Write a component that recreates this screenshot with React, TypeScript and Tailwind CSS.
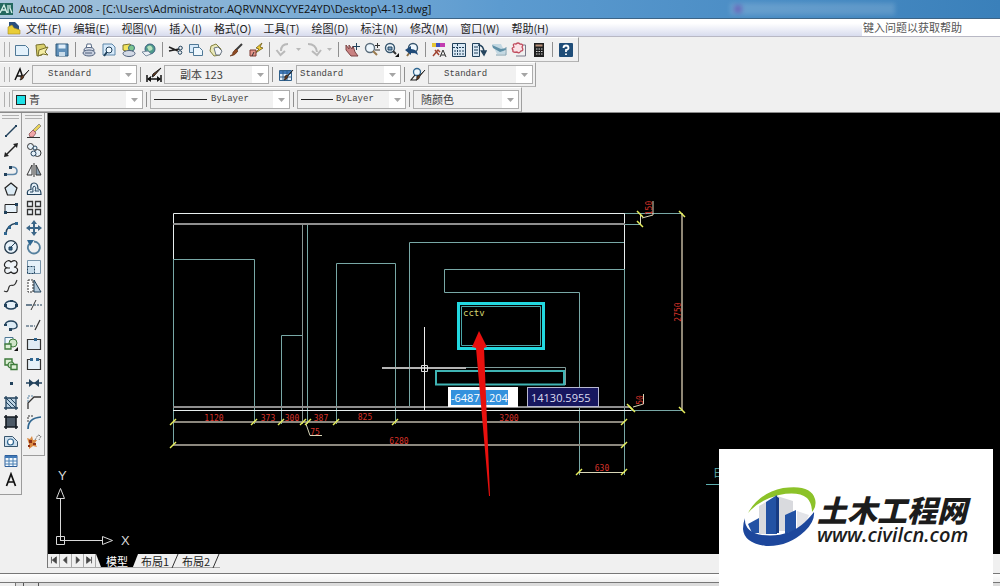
import type { ReactNode } from 'react'

type Tool = { name: string; art: ReactNode }

const INK = '#22425c'

const standardGroups: Tool[][] = [
  [
    {
      name: '新建',
      art: <path d="M1.500 3.500h10l3 3v7h-13z" fill="#e3f1fb" stroke="#4f7896" />,
    },
    {
      name: '打开',
      art: (
        <>
          <path d="M2 3l8-1 2 3-4 8-5 1z" fill="#d9cf6a" stroke="#77702e" />
          <path d="M5 8l9-3-3 5 3 3-5-1-5 2z" fill="#f4eda4" stroke="#77702e" />
        </>
      ),
    },
    {
      name: '保存',
      art: (
        <>
          <path d="M2 2h12v12H2z" fill="#5f8fb8" stroke="#2e5878" />
          <path d="M4.500 2.500h7v4h-7z" fill="#dfeefa" />
          <path d="M5 10h6v4H5z" fill="#c9dcea" />
        </>
      ),
    },
  ],
  [
    {
      name: '打印',
      art: (
        <>
          <path d="M5 7l1-5h4l1 5" fill="#fff" stroke="#5a6c86" />
          <ellipse cx="8" cy="8" rx="5" ry="2.500" fill="#dfe4ee" stroke="#50617c" />
          <ellipse cx="8" cy="11" rx="6" ry="3" fill="#c7cfde" stroke="#50617c" />
          <path d="M4 11h7" stroke="#50617c" />
        </>
      ),
    },
    {
      name: '打印预览',
      art: (
        <>
          <path d="M2 2h9l3 3v8H2z" fill="#d7eafa" stroke="#5d86a8" />
          <circle cx="8" cy="8" r="3" fill="#f4fbff" stroke={INK} />
          <path d="M6 10l-3 4" stroke={INK} strokeWidth="2" />
        </>
      ),
    },
    {
      name: '发布',
      art: (
        <>
          <path d="M2 3l7-1 3 4-5 4-5-2z" fill="#f1e35c" stroke="#7b742e" />
          <circle cx="10.500" cy="6" r="3" fill="#7cc68f" stroke="#3c6a7c" />
          <ellipse cx="8" cy="11.500" rx="6" ry="3" fill="#d3dae6" stroke="#50617c" />
        </>
      ),
    },
    {
      name: '三维 DWF',
      art: (
        <>
          <circle cx="9" cy="7" r="5" fill="#4f9a8c" stroke="#3c6180" />
          <path d="M6 5q3-3 5 0t-3 4z" fill="#b9e2bd" />
          <path d="M1 10l6-1 3 3-5 2z" fill="#e9eef4" stroke="#7c8ea0" />
        </>
      ),
    },
  ],
  [
    {
      name: '剪切',
      art: (
        <>
          <path d="M1 5l9 4M1 9l10-2" stroke="#222" strokeWidth="1.500" />
          <circle cx="12.500" cy="6" r="1.800" fill="none" stroke={INK} />
          <circle cx="12" cy="10.500" r="1.800" fill="none" stroke={INK} />
        </>
      ),
    },
    {
      name: '复制',
      art: (
        <>
          <path d="M1.500 2.500h9v8h-9z" fill="#d7eafa" stroke="#4f7896" />
          <path d="M5.500 5.500h6l3 3v5h-9z" fill="#eef7fd" stroke="#4f7896" />
        </>
      ),
    },
    {
      name: '粘贴',
      art: (
        <>
          <path d="M3 4l5-2 5 5-1 6-6 1-4-5z" fill="#e9e8b8" stroke="#85823f" />
          <path d="M6 6l4-1 4 4-2 4H8z" fill="#f3f6fa" stroke="#6b7684" />
        </>
      ),
    },
    {
      name: '特性匹配',
      art: (
        <>
          <path d="M14 2L7 9" stroke="#3c3c3c" strokeWidth="2" />
          <path d="M8 7l2 2q-3 5-8 5 3-1 3-4z" fill="#8e4b23" stroke="#5c2c10" strokeWidth=".6" />
        </>
      ),
    },
    {
      name: '块编辑器',
      art: (
        <>
          <path d="M14 1L8 6l3 1-5 5 9-6-3-1z" fill="#f2cd36" stroke="#6d5a17" strokeWidth=".8" />
          <path d="M2 8h6v6H2z" fill="#e4968a" stroke="#7a3930" />
          <path d="M4 14l2-4" stroke="#333" />
        </>
      ),
    },
  ],
]

const undoTools: Tool[] = [
  {
    name: '放弃',
    art: <path d="M13 2Q6 2 6 9M1.500 8l4 5 4.500-4" fill="none" stroke="#b9b9b9" strokeWidth="2" />,
  },
  {
    name: '重做',
    art: <path d="M2 2q8 0 9 8M6 9l5 4 4-5" fill="none" stroke="#b9b9b9" strokeWidth="2" />,
  },
]

const viewGroups: Tool[][] = [
  [
    {
      name: '实时平移',
      art: (
        <>
          <path d="M2 3l3 4 0-4 3 4 1-3 2 6 3 4H7L2 8z" fill="#c98282" stroke="#7d4545" />
          <path d="M12.500 1v7M9 4.500h7" stroke={INK} />
        </>
      ),
    },
    {
      name: '实时缩放',
      art: (
        <>
          <circle cx="6" cy="6" r="4.500" fill="#eef7fd" stroke="#5b6d7c" strokeWidth="1.400" />
          <path d="M9 9l4 4" stroke="#9a7a4c" strokeWidth="2" />
          <path d="M13.500 1v5M11 3.500h5M11 8h5" stroke="#333" />
        </>
      ),
    },
    {
      name: '窗口缩放',
      art: (
        <>
          <circle cx="6" cy="6" r="4.500" fill="#eef7fd" stroke="#37556d" strokeWidth="1.400" />
          <path d="M4 5h4v3H4z" fill="#7fa4c4" stroke={INK} />
          <path d="M9 9l3 3" stroke="#333" strokeWidth="2" />
          <path d="M15 11v4h-4z" fill="#111" />
        </>
      ),
    },
    {
      name: '缩放上一个',
      art: (
        <>
          <circle cx="9" cy="6" r="4.500" fill="#eef7fd" stroke="#37556d" strokeWidth="1.400" />
          <path d="M6 10l-3 4" stroke="#8a6f48" strokeWidth="2" />
          <path d="M1 8l6-4v3q6 0 7 6-4-3-7-2v2z" fill="#1f4a78" />
        </>
      ),
    },
  ],
  [
    {
      name: '特性',
      art: (
        <>
          <path d="M1 1h4v4H1z" fill="#e6c534" />
          <path d="M5 1h4v4H5z" fill="#3d4fbf" />
          <path d="M9 1h5v4H9z" fill="#c23cb0" />
          <path d="M2 14l5-6 2 2M4 8l4 5" stroke="#a04230" strokeWidth="1.500" fill="none" />
          <path d="M9 15l3-7 3 7M10 13h4" stroke="#333" fill="none" />
        </>
      ),
    },
    {
      name: '设计中心',
      art: (
        <>
          <path d="M1.500 1.500h13v13h-13z" fill="#d9e8f4" stroke={INK} />
          <path d="M6.500 2v12M2 5.500h12M8 9h5M8 12h5M3 9h2M3 12h2" stroke={INK} strokeDasharray="2 1" />
        </>
      ),
    },
    {
      name: '工具选项板',
      art: (
        <>
          <path d="M1.500 1.500h7v13h-7z" fill="#d9e8f4" stroke={INK} />
          <path d="M3 5h4M3 8h4M3 11h4" stroke={INK} />
          <path d="M7 3q6 0 6 8M10.500 9l2.500 4 2-4z" fill="none" stroke={INK} strokeWidth="1.500" />
        </>
      ),
    },
    {
      name: '图纸集',
      art: (
        <>
          <path d="M1 2h9l5 10H6z" fill="#c3d8e2" />
          <path d="M1 3l9 4 5-1v2L9 10 2 6z" fill="#5f8fa6" />
          <path d="M5 13h10V5" stroke="#7f9fae" fill="none" />
        </>
      ),
    },
    {
      name: '标记集',
      art: (
        <>
          <path d="M12 3h2.500v11H5" fill="none" stroke="#7a7a8a" />
          <path
            d="M3 5q-2-4 2-3 2-2 4 0 4 0 2 3 2 4-1 4-2 3-4 1-5 1-4-2-2-2 1-3z"
            fill="#fae2e6"
            stroke="#c04c5e"
            strokeWidth="1.300"
          />
        </>
      ),
    },
    {
      name: '快速计算器',
      art: (
        <>
          <path d="M3 1h10v14H3z" fill="#1f1f1f" />
          <path d="M4.500 2.500h7v2h-7z" fill="#b89078" />
          <path d="M5 7h7M5 9.500h7M5 12h7" stroke="#d2d2d2" strokeDasharray="1.500 1" />
        </>
      ),
    },
  ],
  [
    {
      name: '帮助',
      art: (
        <>
          <rect x="1" y="1" width="14" height="14" rx="1" fill="#1f4d78" />
          <path d="M5.500 6q0-2.500 2.500-2.500T10.500 6Q10.500 7.500 8 8v2M8 11.500v1.500" fill="none" stroke="#fff" strokeWidth="1.800" />
        </>
      ),
    },
  ],
]

const drawTools: Tool[] = [
  {
    name: '直线',
    art: (
      <>
        <path d="M3 13L13 3" stroke={INK} strokeWidth="1.500" />
        <path d="M2 12h2v2H2zM12 2h2v2h-2z" fill={INK} />
      </>
    ),
  },
  {
    name: '构造线',
    art: (
      <>
        <path d="M3 13L13 3" stroke="#222" strokeWidth="1.500" />
        <path d="M1 15l1-5 4 4zM15 1l-1 5-4-4z" fill="#222" />
      </>
    ),
  },
  {
    name: '多段线',
    art: (
      <>
        <path d="M2 12.500h8q4 0 4-3.500T10 5H8" fill="none" stroke="#5d86a8" strokeWidth="1.500" />
        <path d="M1 11h3v3H1zM6 4h3v3H6z" fill={INK} />
      </>
    ),
  },
  {
    name: '正多边形',
    art: <path d="M8 2l6 5-2.500 7h-7L2 7z" fill="#dcebf5" stroke="#222" strokeWidth="1.200" />,
  },
  {
    name: '矩形',
    art: (
      <>
        <path d="M2 4.500h12v8H2z" fill="#e6f1f9" stroke="#222" />
        <path d="M1 11h3v3H1zM12 3h3v3h-3z" fill={INK} />
      </>
    ),
  },
  {
    name: '圆弧',
    art: (
      <>
        <path d="M3 14q0-9 11-11" fill="none" stroke={INK} strokeWidth="1.300" />
        <path d="M1 12h3v3H1zM5 6h3v3H5zM12 2h3v3h-3z" fill="#2f6690" />
      </>
    ),
  },
  {
    name: '圆',
    art: (
      <>
        <circle cx="8" cy="8" r="6.300" fill="#e6f1f9" stroke="#23384a" strokeWidth="1.300" />
        <path d="M7 9l5-5M6 8h3v3H6z" fill="#2f6690" stroke={INK} />
      </>
    ),
  },
  {
    name: '修订云线',
    art: (
      <path
        d="M5 9Q0 8 2 4q3-4 6-1 5-3 6 1 0 4-3 4 5 1 3 5-3 3-6 0-4 3-6 0-1-4 2-4h3"
        fill="#eef3f7"
        stroke="#222"
        strokeWidth="1.200"
      />
    ),
  },
  {
    name: '样条曲线',
    art: <path d="M1 13c4 2 4-1 5-4s3-1 5-2 2-3 3-5" fill="none" stroke="#333" strokeWidth="1.200" />,
  },
  {
    name: '椭圆',
    art: (
      <>
        <ellipse cx="8" cy="8" rx="6" ry="4" fill="#e6f1f9" stroke={INK} strokeWidth="1.400" />
        <path d="M1 7h3v3H1zM12 7h3v3h-3zM7 3h3v2H7z" fill={INK} />
      </>
    ),
  },
  {
    name: '椭圆弧',
    art: (
      <>
        <path d="M2 8q1-4 6-4t6 4-6 4" fill="#dcebf5" stroke={INK} strokeWidth="1.400" />
        <path d="M6 11h3v3H6zM1 7h3v2H1z" fill={INK} />
      </>
    ),
  },
  {
    name: '插入块',
    art: (
      <>
        <path d="M2 1.500h8v8H2z" fill="#eef7fd" stroke="#4f7896" />
        <circle cx="10" cy="7" r="4" fill="#cfe6c8" stroke="#3d7a3a" />
        <path d="M2 8h6v5H2z" fill="#dff0d8" stroke="#3d7a3a" strokeWidth="1.300" />
        <path d="M15 11v4h-4z" fill="#111" />
      </>
    ),
  },
  {
    name: '创建块',
    art: (
      <>
        <path d="M2 3h7v6H2z" fill="#dff0d8" stroke="#3d7a3a" strokeWidth="1.400" />
        <circle cx="8" cy="9" r="3" fill="#cfe6c8" stroke="#3d7a3a" strokeWidth="1.200" />
        <path d="M8 8.500h6v5H8z" fill="#dff0d8" stroke="#3d7a3a" strokeWidth="1.400" />
      </>
    ),
  },
  {
    name: '点',
    art: <path d="M7 7h3v3H7z" fill={INK} />,
  },
  {
    name: '图案填充',
    art: (
      <>
        <path d="M3 3h10v10H3z" fill="#bcd2e2" />
        <path d="M3 7l6 6M3 3l10 10M7 3l6 6" stroke={INK} />
        <path d="M3 1v14M13 1v14M1 3h14M1 13h14" stroke={INK} strokeWidth="1.300" />
      </>
    ),
  },
  {
    name: '渐变色',
    art: (
      <>
        <path d="M3 3h10v10H3z" fill="#4c5966" />
        <path d="M3 1v14M13 1v14M1 3h14M1 13h14" stroke="#151b22" strokeWidth="1.600" />
      </>
    ),
  },
  {
    name: '面域',
    art: (
      <>
        <path d="M1.500 3.500h8l5 5v5h-13z" fill="#cfe0ee" stroke="#37556d" />
        <circle cx="7.500" cy="9" r="3" fill="#fff" stroke="#2f6690" strokeWidth="1.200" />
      </>
    ),
  },
  {
    name: '表格',
    art: (
      <>
        <path d="M2 2.500h12v11H2z" fill="#f4f9fd" stroke="#2f5f9a" />
        <path d="M2 3h12v2H2z" fill="#3f78b8" />
        <path d="M6 3v10M10 3v10M2 8h12M2 11h12" stroke="#4a80b4" />
      </>
    ),
  },
  {
    name: '多行文字',
    art: <path d="M3.500 14L8 2l4.500 12M5 10h6" fill="none" stroke="#111" strokeWidth="1.700" />,
  },
]

const modifyTools: Tool[] = [
  {
    name: '删除',
    art: (
      <>
        <path d="M7 7l6-6 2 2-6 6z" fill="#e8d25a" stroke="#777" strokeWidth=".7" />
        <path d="M3 11l4-4 3 3-3 4H4z" fill="#f0a6a8" stroke="#8d4f52" strokeWidth=".8" />
        <path d="M1 14.500h13" stroke="#333" />
      </>
    ),
  },
  {
    name: '复制对象',
    art: (
      <>
        <circle cx="4.500" cy="4.500" r="3" fill="#e6f1f9" stroke="#333" />
        <circle cx="9" cy="6" r="2" fill="#e6f1f9" stroke={INK} />
        <circle cx="11.500" cy="11" r="3.500" fill="#e6f1f9" stroke="#333" />
        <circle cx="7.500" cy="11.500" r="2.500" fill="#e6f1f9" stroke={INK} />
      </>
    ),
  },
  {
    name: '镜像',
    art: (
      <>
        <path d="M6 3v10H1z" fill="#f3f6f8" stroke="#333" />
        <path d="M10 3v10h5z" fill="#8aa0b2" stroke="#333" />
        <path d="M8 1v14" stroke="#333" />
      </>
    ),
  },
  {
    name: '偏移',
    art: (
      <>
        <path d="M1.500 13.500q-1-5 3.500-5Q4 2 8 2t4 6q3 0 3 5.500z" fill="#e6f1f9" stroke={INK} strokeWidth="1.200" />
        <path d="M4 11h3q-1-5 1-6 3 1 1 5h4" fill="none" stroke={INK} />
      </>
    ),
  },
  {
    name: '阵列',
    art: (
      <path
        d="M1.500 1.500h5v5h-5zM9.500 1.500h5v5h-5zM1.500 9.500h5v5h-5zM9.500 9.500h5v5h-5z"
        fill="#eef3f7"
        stroke="#333"
        strokeWidth="1.300"
      />
    ),
  },
  {
    name: '移动',
    art: (
      <>
        <path d="M8 2v12M2 8h12" stroke="#3b6688" strokeWidth="2" />
        <path d="M8 0l3 4H5zM8 16l3-4H5zM0 8l4-3v6zM16 8l-4-3v6z" fill="#3b6688" />
      </>
    ),
  },
  {
    name: '旋转',
    art: (
      <>
        <path d="M8 2.500A6 6 0 1 1 3 5" fill="none" stroke="#55809e" strokeWidth="1.800" />
        <path d="M1 1h7l-4 6z" fill="#2f6690" />
      </>
    ),
  },
  {
    name: '缩放',
    art: (
      <>
        <path d="M1.500 1.500h13v13h-13z" fill="#e6f1f9" stroke="#7794aa" />
        <path d="M1.500 7.500h7v7h-7z" fill="#c7dcea" stroke={INK} strokeDasharray="2 1" />
      </>
    ),
  },
  {
    name: '拉伸',
    art: (
      <>
        <path d="M8 2v12h7z" fill="#b4cadb" stroke={INK} />
        <path d="M2 2h5v12H2z" fill="#fff" stroke="#333" strokeDasharray="2 1" />
      </>
    ),
  },
  {
    name: '修剪',
    art: (
      <>
        <path d="M0 8h6" stroke={INK} strokeWidth="1.300" />
        <path d="M8 8h8" stroke={INK} strokeDasharray="2 1" />
        <path d="M5 13l5-10" stroke="#333" />
      </>
    ),
  },
  {
    name: '延伸',
    art: (
      <>
        <path d="M0 9h9" stroke={INK} strokeDasharray="3 1" />
        <path d="M9 13l5-10" stroke="#333" strokeWidth="1.300" />
      </>
    ),
  },
  {
    name: '打断于点',
    art: (
      <>
        <path d="M1.500 3.500h13v10h-13z" fill="#dfebf4" stroke="#333" strokeWidth="1.200" />
        <path d="M8 2h3v3H8z" fill="#2f6690" />
      </>
    ),
  },
  {
    name: '打断',
    art: (
      <>
        <path d="M1.500 3.500h13v10h-13z" fill="#e6f1f9" />
        <path d="M5 3.500H1.500v10h13v-10H11" stroke="#333" strokeWidth="1.200" />
        <path d="M4 2h3v3H4zM10 2h3v3h-3z" fill="#2f6690" />
      </>
    ),
  },
  {
    name: '合并',
    art: (
      <>
        <path d="M0 8h16" stroke={INK} strokeWidth="1.500" />
        <path d="M3 4l5 4-5 4zM13 4L8 8l5 4z" fill={INK} />
      </>
    ),
  },
  {
    name: '倒角',
    art: (
      <>
        <path d="M2 15V9l6-6h7" fill="none" stroke="#333" strokeWidth="1.300" />
        <path d="M2 8V2h6" fill="none" stroke="#5580a0" strokeDasharray="2 1" />
      </>
    ),
  },
  {
    name: '圆角',
    art: (
      <>
        <path d="M2 15Q2 4 15 3" fill="none" stroke="#2f6690" strokeWidth="1.700" />
        <path d="M2 8V2h6" fill="none" stroke="#333" strokeDasharray="2 1" />
      </>
    ),
  },
  {
    name: '分解',
    art: (
      <>
        <path d="M9 7l3-5 3 1-2 4" stroke="#777" fill="none" strokeDasharray="2 1" />
        <path d="M1 5l3 1 2-3 1 4 4 0-2 3 2 4-4-1-4 3 0-5z" fill="#d98a43" />
        <path d="M3 7h3v3H3zM7 10h3v2H7zM2 12h2v2H2z" fill="#8c2f16" />
      </>
    ),
  },
]

const brush = (
  <path d="M15 3l-5 6q-1 4-4 4 1-1 1-4l3-1z" fill="#6b3b1c" stroke="#222" strokeWidth=".8" />
)

const styles = [
  {
    name: '文字样式',
    value: 'Standard',
    pad: 'pl-[15px] font-[Liberation_Mono,monospace] text-[9px]',
    art: (
      <>
        <path d="M1 13L6 2l3 9M3 9h5" fill="none" stroke="#111" strokeWidth="1.500" />
        {brush}
      </>
    ),
  },
  {
    name: '标注样式',
    value: '副本 123',
    pad: 'pl-[15px] font-[Noto_Sans_CJK_SC,sans-serif] text-[11px]',
    art: (
      <>
        <path d="M1 8v7M15 8v7M2 12h12" stroke="#111" strokeWidth="1.500" />
        <path d="M1 12l4-3v6zM15 12l-4-3v6z" fill="#111" />
        <path d="M15 1l-7 8-2 1 1-3z" fill="#6b3b1c" stroke="#222" />
      </>
    ),
  },
  {
    name: '表格样式',
    value: 'Standard',
    pad: 'pl-[3px] font-[Liberation_Mono,monospace] text-[9px]',
    art: (
      <>
        <path d="M1.500 3.500h12v10h-12z" fill="#dfebf6" stroke="#2f5f8a" />
        <path d="M2 4h11v3H2z" fill="#3f78b8" />
        <path d="M5 4v9M9 4v9M2 10h11" stroke="#2f5f8a" />
        {brush}
      </>
    ),
  },
  {
    name: '多重引线样式',
    value: 'Standard',
    pad: 'pl-[15px] font-[Liberation_Mono,monospace] text-[9px]',
    art: (
      <>
        <circle cx="7" cy="5" r="3.500" fill="#eef7fd" stroke="#2f6690" strokeWidth="1.300" />
        <path d="M5 8l-4 5h6" fill="none" stroke="#222" strokeWidth="1.200" />
        {brush}
      </>
    ),
  },
]

const menus = [
  '文件(F)', '编辑(E)', '视图(V)', '插入(I)', '格式(O)', '工具(T)',
  '绘图(D)', '标注(N)', '修改(M)', '窗口(W)', '帮助(H)',
]

function Icon({ children }: { children: ReactNode }) {
  return (
    <svg viewBox="0 0 16 16" className="size-4 shrink-0" fill="none" aria-hidden="true">
      {children}
    </svg>
  )
}

function ToolButton({ tool }: { tool: Tool }) {
  return (
    <button
      type="button"
      aria-label={tool.name}
      className="flex w-5 items-center justify-center hover:bg-sky-100"
    >
      <Icon>{tool.art}</Icon>
    </button>
  )
}

function Divider() {
  return (
    <span className="flex w-[7px] shrink-0 justify-center py-1">
      <span className="w-px bg-[#8f8f8f]" />
    </span>
  )
}

function Grip() {
  return (
    <span className="flex w-3 shrink-0 gap-1 py-1 pl-1">
      <span className="w-px bg-[#b0b0b0]" />
      <span className="w-px bg-[#b0b0b0]" />
    </span>
  )
}

function Toolbar({ children }: { children: ReactNode }) {
  return (
    <div className="flex h-[25px] w-fit items-stretch border-t border-r border-b border-t-white border-r-[#a0a0a0] border-b-[#b4b4b4] pr-[2px]">
      {children}
    </div>
  )
}

function MoreButton({ name }: { name: string }) {
  return (
    <button type="button" aria-label={name} className="flex w-[11px] items-center justify-center">
      <svg viewBox="0 0 5 3" className="w-[5px]" aria-hidden="true">
        <path d="M0 0h5L2.500 3z" fill="#b9b9b9" />
      </svg>
    </button>
  )
}

function Combo({
  name,
  value,
  width,
  pad,
  children,
}: {
  name: string
  value: string
  width: string
  pad: string
  children?: ReactNode
}) {
  return (
    <div className={`relative h-[19px] self-center ${width}`}>
      <select
        aria-label={name}
        className={`block size-full appearance-none border border-[#adadad] bg-[#f1f1f1] text-[#444] outline-none ${pad}`}
      >
        <option>{value}</option>
      </select>
      <span className="pointer-events-none absolute inset-y-px right-px flex w-4 items-center justify-center bg-white">
        <svg viewBox="0 0 7 4" className="w-[7px]" aria-hidden="true">
          <path d="M0 0h7L3.500 4z" fill="#a5a5a5" />
        </svg>
      </span>
      {children}
    </div>
  )
}

function Palette({ tools, label, size }: { tools: Tool[]; label: string; size: string }) {
  return (
    <div
      role="toolbar"
      aria-label={label}
      className="w-[22px] border-r border-b border-[#9c9c9c] pb-1"
    >
      <div className="mx-[2px] mt-[2px] h-1 border-y border-[#b0b0b0]" />
      <div className={`grid auto-rows-fr justify-center pt-[2px] ${size}`}>
        {tools.map((tool) => (
          <ToolButton key={tool.name} tool={tool} />
        ))}
      </div>
    </div>
  )
}

// [x, y] of the oblique strokes that close each dimension line
const ticks = [
  [173, 422], [254, 422], [281, 422], [303, 422], [308, 422], [336, 422],
  [395, 422], [624, 422], [173, 445], [624, 445], [579, 472], [624, 472],
]
const backTicks = [[640, 214], [640, 224], [682, 214], [682, 410], [630, 407], [632, 409]]

const dims = [
  { x: 214, y: 421, text: '1120' },
  { x: 268, y: 421, text: '373' },
  { x: 292, y: 421, text: '300' },
  { x: 321, y: 421, text: '387' },
  { x: 365, y: 420, text: '825' },
  { x: 509, y: 421, text: '3200' },
  { x: 315, y: 435, text: '75' },
  { x: 399, y: 444, text: '6280' },
  { x: 602, y: 471, text: '630' },
]
const sideDims = [
  { x: 652, y: 208, text: '150' },
  { x: 681, y: 312, text: '2750' },
  { x: 643, y: 400, text: '50' },
]

function Drawing() {
  return (
    <svg
      viewBox="48 113 952 441"
      width="952"
      height="441"
      className="absolute top-0 left-0 font-[DejaVu_Sans_Mono,monospace]"
      fill="none"
      role="img"
      aria-label="立面图"
    >
      <g stroke="#78a8a6">
        <path d="M173.500 259v187M173 259.500h81.500V424M281.500 424v-88.500h21M307.500 224v200M336.500 424V263.500h59V424" />
        <path d="M409.500 407V242.500H624M624 269.500H444.500v23h135V475M624.500 269v206M624 213.500h59M624 224.500h16M631 410.500h52" />
      </g>
      <path d="M302.500 224v200" stroke="#8a9896" />
      <path d="M173.500 259v-45.500h451V269M173 410.500h458" stroke="#e8eeee" />
      <path d="M173 224h452M173 407h457" stroke="#8f8f8f" strokeWidth="2" />
      <path d="M173 422h451M173 445h451" stroke="#8c887e" strokeWidth="2" />
      <path d="M682 213v197" stroke="#8f8775" strokeWidth="2" />
      <path d="M579 472.500h46M306 424l4 11.500h12M640.500 214v10M642 218l11-3v-14M633 407l10.500-3v-10" stroke="#d9d6b8" />
      <g stroke="#e6ee5c" strokeWidth="1.500">
        {ticks.map(([x, y]) => (
          <path key={`${x}-${y}`} d={`M${x - 3} ${y + 3}l6-6`} />
        ))}
        {backTicks.map(([x, y]) => (
          <path key={`${x}-${y}`} d={`M${x - 3} ${y - 3}l6 6`} />
        ))}
      </g>

      <path d="M458.500 303.500h85v45h-85z" stroke="#22d8e0" strokeWidth="3" />
      <path d="M461.500 306.500h79v39h-79z" stroke="#4aa6a8" />
      <path d="M436 367.500h129.500V385" stroke="#7f9c9a" />
      <path d="M436 371h128v13.500H436z" stroke="#3fb4b4" strokeWidth="2" />

      <path d="M382 368h84" stroke="#b4b4b4" strokeWidth="2" />
      <path d="M424.500 327v84" stroke="#eee" />
      <path d="M421.500 365.500h6v6h-6z" stroke="#ddd" />

      <path d="M60.500 541v-43M60 540.500h42M56.500 536.500h8v8h-8zM56.500 498.500l4-10 4 10zM102.500 536.500l10 4-10 4z" stroke="#d8d8d8" />
      <path d="M706 484.500h14" stroke="#5fb0b0" />

      <g fill="#d8332a" fontSize="8" textAnchor="middle">
        {dims.map((d) => (
          <text key={d.text} x={d.x} y={d.y}>{d.text}</text>
        ))}
        {sideDims.map((d) => (
          <text key={d.text} x={d.x} y={d.y} transform={`rotate(-90 ${d.x} ${d.y})`}>{d.text}</text>
        ))}
      </g>
      <text x="463" y="316" fontSize="9" fill="#d6d670">cctv</text>
      <g fill="#d8d8d8" fontSize="13" className="font-[Liberation_Sans,sans-serif]">
        <text x="58" y="480">Y</text>
        <text x="121" y="545">X</text>
      </g>
      <text x="713" y="477" fontSize="11" fill="#5fb0b0" className="font-[Noto_Sans_CJK_SC,sans-serif]">日</text>
    </svg>
  )
}

function CursorInput() {
  const field = 'h-[15px] p-0 font-[Open_Sans,sans-serif] text-[11px] leading-[15px] outline-none'
  return (
    <div className="absolute top-[274px] left-[400px] flex gap-[9px]">
      <div className="flex h-5 w-[70px] items-center bg-white pl-[3px]">
        <input aria-label="X" defaultValue="-64871.204" className={`w-[57px] bg-[#3391dd] text-white ${field}`} />
      </div>
      <div className="flex h-5 w-[72px] items-center border border-[#b9b9d2] bg-[#17175f] pl-[3px]">
        <input aria-label="Y" defaultValue="14130.5955" className={`w-16 bg-transparent text-[#dcdcf0] ${field}`} />
      </div>
    </div>
  )
}

function LayoutTabs() {
  return (
    <div className="flex h-[14px] shrink-0 items-stretch bg-[#f0f0f0] font-[Noto_Sans_CJK_SC,sans-serif] text-[11px] leading-[14px]">
      {[
        ['第一个', 'M3 1v8M9 1L4 5l5 4z'],
        ['上一个', 'M7 1L3 5l4 4z'],
        ['下一个', 'M4 1l4 4-4 4z'],
        ['最后一个', 'M8 1v8M2 1l5 4-5 4z'],
      ].map(([name, d]) => (
        <button
          key={name}
          type="button"
          aria-label={name}
          className="flex w-3 items-center justify-center border-r border-b border-[#a8a8a8]"
        >
          <svg viewBox="0 0 11 10" className="w-[9px]" aria-hidden="true">
            <path d={d} fill="#444" stroke="#444" />
          </svg>
        </button>
      ))}
      <div role="tablist" className="flex border-b border-[#a8a8a8]">
        <button
          type="button"
          role="tab"
          aria-selected="true"
          className="w-[42px] bg-black text-white [clip-path:polygon(0_0,100%_0,88%_100%,12%_100%)]"
        >
          模型
        </button>
        {['布局1', '布局2'].map((name) => (
          <button
            key={name}
            type="button"
            role="tab"
            aria-selected="false"
            className="flex w-[41px] items-center justify-end whitespace-nowrap"
          >
            {name}
            <svg viewBox="0 0 8 14" className="ml-[2px] h-[14px] w-2 shrink-0" fill="none" aria-hidden="true">
              <path d="M7 0L1 14" stroke="#333" />
            </svg>
          </button>
        ))}
      </div>
    </div>
  )
}

function SiteBadge() {
  return (
    <div className="absolute right-[7px] bottom-0 flex h-[137px] w-[274px] items-center bg-white pl-6">
      <svg viewBox="0 0 74 62" className="h-[62px] w-[74px] shrink-0" fill="none" aria-hidden="true">
        <path d="M5 26Q16 6 40 1 68-3 72 12q2 7-3 13 0-9-5-14Q55 4 36 8 16 13 5 26z" fill="#8cc229" />
        <path d="M34 9l16 5v13l-8 3V44h-8z" fill="#d9dade" />
        <path d="M54 24l12 4-5 11-7 4z" fill="#e3e4e8" />
        <path d="M16 19l7-4v32h-7z" fill="#d9dade" />
        <path d="M23 15l11-7v39H23z" fill="#2352a4" />
        <path d="M33 9l3 2v35h-3z" fill="#173b83" />
        <path d="M42 28l11-5v20l-11 4z" fill="#2352a4" />
        <path d="M5 37l11-6v15H9z" fill="#2352a4" />
        <path d="M2 31q-1 14 17 17 26 3 43-13 6-6 9-10 1 9-9 19Q45 60 23 59 1 56 0 42q0-6 2-11z" fill="#1d479c" />
      </svg>
      <div className="pt-[5px] text-[#1c1c1c] italic">
        <p className="font-[Noto_Sans_CJK_SC,sans-serif] text-[30px] leading-[30px] font-black">土木工程网</p>
        <p className="font-[Open_Sans,sans-serif] text-[20px] leading-[22px] font-semibold">www.civilcn.com</p>
      </div>
    </div>
  )
}

export default function App() {
  return (
    <div className="relative flex h-screen flex-col overflow-hidden bg-[#f0f0f0] text-[#222]">
      <header className="flex h-[19px] shrink-0 items-center gap-[6px] border-b border-[#3d6486] bg-linear-to-r from-[#a9c6dc] via-[#5c9bd0] to-[#3a80ba]">
        <svg viewBox="0 0 13 12" className="h-3 w-[13px] shrink-0" fill="none" aria-hidden="true">
          <path d="M0 0h13v12H0z" fill="#23685f" />
          <path d="M0 10l4-8 3 8M2 7h4M8 2v8M10 2v3l2 5" stroke="#d6f0ea" strokeWidth="1.300" />
        </svg>
        <h1 className="font-[Open_Sans,sans-serif] text-[11px] leading-[18px] whitespace-nowrap text-[#111]">
          AutoCAD 2008 - [C:\Users\Administrator.AQRVNNXCYYE24YD\Desktop\4-13.dwg]
        </h1>
        <span className="mr-[105px] ml-auto flex h-3 w-[165px] items-center bg-white/15 pl-1 blur-[2px]">
          <span className="size-2 bg-[#6a4fb0]/60" />
        </span>
      </header>

      <div className="flex h-[18px] shrink-0 items-stretch justify-between border-b border-[#b8b8c4] bg-linear-to-b from-white from-25% to-[#d8dcee]">
        <nav className="flex items-center gap-3 pl-[7px] font-[Noto_Sans_CJK_SC,sans-serif] text-[11px] leading-[16px]">
          <svg viewBox="0 0 14 14" className="-mr-[7px] size-[14px]" fill="none" aria-hidden="true">
            <path d="M2 1h6l4 4v5H2z" fill="#2a4f7c" />
            <path d="M1 6l4-2 2 3 6 2v4H1z" fill="#e9cd38" stroke="#a98b1c" strokeWidth=".6" />
          </svg>
          {menus.map((menu) => (
            <button key={menu} type="button" className="whitespace-nowrap">
              {menu}
            </button>
          ))}
        </nav>
        <input
          aria-label="帮助搜索"
          placeholder="键入问题以获取帮助"
          className="w-[138px] bg-white pl-px font-[Noto_Sans_CJK_SC,sans-serif] text-[11px] outline-none placeholder:text-[#555]"
        />
      </div>

      <div className="shrink-0">
        <Toolbar>
          <Grip />
          {standardGroups.map((group) => (
            <div key={group[0].name} className="flex">
              {group.map((tool) => (
                <ToolButton key={tool.name} tool={tool} />
              ))}
              <Divider />
            </div>
          ))}
          {undoTools.map((tool) => (
            <div key={tool.name} className="flex">
              <ToolButton tool={tool} />
              <MoreButton name={`${tool.name}列表`} />
            </div>
          ))}
          {viewGroups.map((group) => (
            <div key={group[0].name} className="flex">
              <Divider />
              {group.map((tool) => (
                <ToolButton key={tool.name} tool={tool} />
              ))}
            </div>
          ))}
        </Toolbar>
        <Toolbar>
          <Grip />
          {styles.map((style, i) => (
            <div key={style.name} className="flex">
              {i > 0 && <Divider />}
              <ToolButton tool={style} />
              <Combo name={style.name} value={style.value} width="w-[105px]" pad={style.pad} />
            </div>
          ))}
        </Toolbar>
        <Toolbar>
          <Grip />
          <Combo
            name="颜色"
            value="青"
            width="w-[131px]"
            pad="pl-4 font-[Noto_Sans_CJK_SC,sans-serif] text-[11px]"
          >
            <span className="pointer-events-none absolute top-[5px] left-1 size-[10px] border border-[#222] bg-[#1fe0e6]" />
          </Combo>
          <Divider />
          <Combo
            name="线型"
            value="ByLayer"
            width="w-[140px]"
            pad="pl-[60px] font-[Liberation_Mono,monospace] text-[9px]"
          >
            <span className="pointer-events-none absolute top-[9px] left-1 h-px w-[53px] bg-[#222]" />
          </Combo>
          <Divider />
          <Combo
            name="线宽"
            value="ByLayer"
            width="w-[109px]"
            pad="pl-[38px] font-[Liberation_Mono,monospace] text-[9px]"
          >
            <span className="pointer-events-none absolute top-[9px] left-1 h-px w-8 bg-[#222]" />
          </Combo>
          <Divider />
          <Combo
            name="打印样式"
            value="随颜色"
            width="w-[106px]"
            pad="pl-[7px] font-[Noto_Sans_CJK_SC,sans-serif] text-[11px]"
          />
        </Toolbar>
      </div>

      <main className="flex min-h-0 flex-1 border-t border-[#8a8a8a]">
        <aside className="flex w-[47px] shrink-0 items-start gap-px">
          <Palette tools={drawTools} label="绘图" size="h-[371px]" />
          <Palette tools={modifyTools} label="修改" size="h-[332px]" />
        </aside>
        <div className="flex min-w-0 flex-1 flex-col border-l border-[#777]">
          <div className="relative min-h-0 flex-1 overflow-hidden bg-black">
            <Drawing />
            <CursorInput />
            <svg
              viewBox="468 328 26 172"
              width="26"
              height="172"
              className="pointer-events-none absolute top-[215px] left-[420px]"
              aria-hidden="true"
            >
              <path d="M479 331l8 16-3 1 6 148h-1l-13-148-4-1z" fill="#e8100e" />
            </svg>
          </div>
          <LayoutTabs />
        </div>
      </main>

      <footer className="h-[18px] shrink-0 pt-[5px]">
        <div className="h-[10px] border-t border-b border-t-[#777] border-b-[#777] bg-linear-to-b from-white to-[#f0f0f0]" />
        <div className="ml-[15px] flex h-[3px] gap-[14px] border-l border-[#777] bg-[#dcdcdc] pl-[7px]">
          <span className="w-px bg-[#555]" />
          <span className="w-px bg-[#555]" />
        </div>
      </footer>

      <SiteBadge />
    </div>
  )
}
